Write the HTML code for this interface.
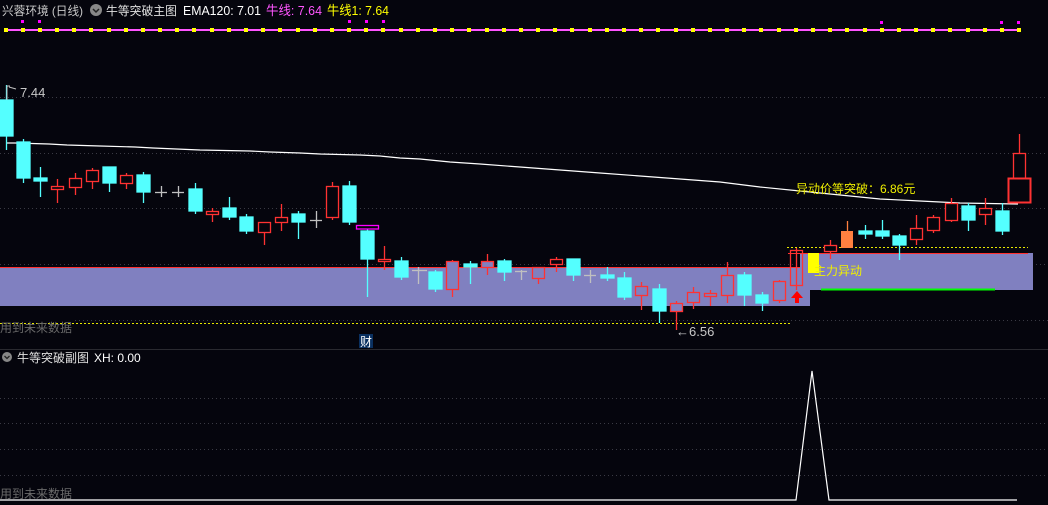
<!DOCTYPE html>
<html><head><meta charset="utf-8"><style>
html,body{margin:0;padding:0;background:#05050d;width:1048px;height:505px;overflow:hidden}
svg{display:block}
text{font-family:"Liberation Sans","Noto Sans CJK SC",sans-serif}
</style></head><body>
<svg width="1048" height="505" viewBox="0 0 1048 505" xmlns="http://www.w3.org/2000/svg">
<rect width="1048" height="505" fill="#05050d"/>
<!-- header -->
<text x="2" y="15" font-size="12" fill="#c8c8c8" textLength="81" lengthAdjust="spacingAndGlyphs">兴蓉环境 (日线)</text>
<circle cx="96" cy="10" r="6" fill="#888"/><path d="M93 9 l3 3 l3 -3" stroke="#222" stroke-width="1.5" fill="none"/>
<text x="106" y="15" font-size="12" fill="#e0e0e0" textLength="71" lengthAdjust="spacingAndGlyphs">牛等突破主图</text>
<text x="183" y="15" font-size="13" fill="#ffffff" textLength="78" lengthAdjust="spacingAndGlyphs">EMA120: 7.01</text>
<text x="266" y="15" font-size="13" fill="#ff55ff" textLength="56" lengthAdjust="spacingAndGlyphs">牛线: 7.64</text>
<text x="327" y="15" font-size="13" fill="#ffff00" textLength="62" lengthAdjust="spacingAndGlyphs">牛线1: 7.64</text>
<!-- magenta line with yellow dots -->
<line x1="4" y1="30" x2="1021" y2="30" stroke="#ff55ff" stroke-width="2"/>
<g fill="#ffff00">
<rect x="4" y="28" width="4" height="4"/><rect x="21" y="28" width="4" height="4"/><rect x="38" y="28" width="4" height="4"/><rect x="55" y="28" width="4" height="4"/><rect x="72" y="28" width="4" height="4"/><rect x="89" y="28" width="4" height="4"/><rect x="107" y="28" width="4" height="4"/><rect x="124" y="28" width="4" height="4"/><rect x="141" y="28" width="4" height="4"/><rect x="158" y="28" width="4" height="4"/><rect x="175" y="28" width="4" height="4"/><rect x="192" y="28" width="4" height="4"/><rect x="210" y="28" width="4" height="4"/><rect x="227" y="28" width="4" height="4"/><rect x="244" y="28" width="4" height="4"/><rect x="261" y="28" width="4" height="4"/><rect x="278" y="28" width="4" height="4"/><rect x="296" y="28" width="4" height="4"/><rect x="313" y="28" width="4" height="4"/><rect x="330" y="28" width="4" height="4"/><rect x="347" y="28" width="4" height="4"/><rect x="364" y="28" width="4" height="4"/><rect x="381" y="28" width="4" height="4"/><rect x="399" y="28" width="4" height="4"/><rect x="416" y="28" width="4" height="4"/><rect x="433" y="28" width="4" height="4"/><rect x="450" y="28" width="4" height="4"/><rect x="467" y="28" width="4" height="4"/><rect x="485" y="28" width="4" height="4"/><rect x="502" y="28" width="4" height="4"/><rect x="519" y="28" width="4" height="4"/><rect x="536" y="28" width="4" height="4"/><rect x="553" y="28" width="4" height="4"/><rect x="570" y="28" width="4" height="4"/><rect x="588" y="28" width="4" height="4"/><rect x="605" y="28" width="4" height="4"/><rect x="622" y="28" width="4" height="4"/><rect x="639" y="28" width="4" height="4"/><rect x="656" y="28" width="4" height="4"/><rect x="674" y="28" width="4" height="4"/><rect x="691" y="28" width="4" height="4"/><rect x="708" y="28" width="4" height="4"/><rect x="725" y="28" width="4" height="4"/><rect x="742" y="28" width="4" height="4"/><rect x="759" y="28" width="4" height="4"/><rect x="777" y="28" width="4" height="4"/><rect x="794" y="28" width="4" height="4"/><rect x="811" y="28" width="4" height="4"/><rect x="828" y="28" width="4" height="4"/><rect x="845" y="28" width="4" height="4"/><rect x="863" y="28" width="4" height="4"/><rect x="880" y="28" width="4" height="4"/><rect x="897" y="28" width="4" height="4"/><rect x="914" y="28" width="4" height="4"/><rect x="931" y="28" width="4" height="4"/><rect x="948" y="28" width="4" height="4"/><rect x="966" y="28" width="4" height="4"/><rect x="983" y="28" width="4" height="4"/><rect x="1000" y="28" width="4" height="4"/><rect x="1017" y="28" width="4" height="4"/>
</g>
<g fill="#ff00ff">
<rect x="21" y="20" width="3" height="3"/><rect x="38" y="20" width="3" height="3"/><rect x="348" y="20" width="3" height="3"/><rect x="365" y="20" width="3" height="3"/><rect x="382" y="20" width="3" height="3"/><rect x="880" y="21" width="3" height="3"/><rect x="1000" y="21" width="3" height="3"/><rect x="1017" y="21" width="3" height="3"/>
</g>
<!-- grid -->
<g stroke="#3a3a44" stroke-width="1" stroke-dasharray="1 3">
<line x1="0" y1="97.5" x2="1048" y2="97.5"/><line x1="0" y1="153.5" x2="1048" y2="153.5"/><line x1="0" y1="208.5" x2="1048" y2="208.5"/><line x1="0" y1="264.5" x2="1048" y2="264.5"/><line x1="75" y1="320.5" x2="1048" y2="320.5"/>
<line x1="0" y1="398.5" x2="1048" y2="398.5"/><line x1="0" y1="423.5" x2="1048" y2="423.5"/><line x1="0" y1="449.5" x2="1048" y2="449.5"/><line x1="0" y1="475.5" x2="1048" y2="475.5"/>
</g>
<!-- purple zones -->
<rect x="0" y="267" width="810" height="39" fill="#8080c0"/>
<line x1="0" y1="267.5" x2="810" y2="267.5" stroke="#ff3030"/>
<rect x="800" y="253" width="233" height="37" fill="#8080c0"/>
<line x1="788" y1="253.5" x2="1028" y2="253.5" stroke="#ff3030"/>
<line x1="821" y1="289.5" x2="995" y2="289.5" stroke="#00ff00" stroke-width="2"/>
<!-- dotted yellow -->
<line x1="0" y1="323.5" x2="790" y2="323.5" stroke="#e8e800" stroke-dasharray="2 2"/>
<line x1="787" y1="247.5" x2="1028" y2="247.5" stroke="#e8e800" stroke-dasharray="2 2"/>
<!-- EMA -->
<polyline fill="none" stroke="#ffffff" stroke-width="1.2" points="7,143 15,143 49,144 67,145 100,146 135,147 153,148 200,150 250,151 270,152 300,153 320,154 360,155 380,156 400,158 420,159 450,162 480,164 520,167 560,170 600,173 640,176 680,179 720,182 760,187 800,191 840,195 880,199 920,201 960,203 1018,204"/>
<!-- candles -->
<g stroke-width="1.3">
<g stroke="#54ffff" fill="#54ffff">
<line x1="6.5" y1="85" x2="6.5" y2="150"/><rect x="0" y="100" width="13" height="36"/>
<line x1="23.5" y1="139" x2="23.5" y2="183"/><rect x="17" y="142" width="13" height="36"/>
<line x1="40.5" y1="167" x2="40.5" y2="197"/><rect x="34" y="178" width="13" height="3"/>
<line x1="109.5" y1="167" x2="109.5" y2="192"/><rect x="103" y="167" width="13" height="16"/>
<line x1="143.5" y1="172" x2="143.5" y2="203"/><rect x="137" y="175" width="13" height="17"/>
<line x1="195.5" y1="183" x2="195.5" y2="214"/><rect x="189" y="189" width="13" height="22"/>
<line x1="229.5" y1="197" x2="229.5" y2="220"/><rect x="223" y="208" width="13" height="9"/>
<line x1="246.5" y1="214" x2="246.5" y2="234"/><rect x="240" y="217" width="13" height="14"/>
<line x1="298.5" y1="211" x2="298.5" y2="239"/><rect x="292" y="214" width="13" height="8"/>
<line x1="349.5" y1="181" x2="349.5" y2="225"/><rect x="343" y="186" width="13" height="36"/>
<line x1="367.5" y1="229" x2="367.5" y2="297"/><rect x="361" y="231" width="13" height="28"/>
<line x1="401.5" y1="257" x2="401.5" y2="280"/><rect x="395" y="261" width="13" height="16"/>
<line x1="435.5" y1="270" x2="435.5" y2="292"/><rect x="429" y="272" width="13" height="17"/>
<line x1="470.5" y1="261" x2="470.5" y2="284"/><rect x="464" y="264" width="13" height="3"/>
<line x1="504.5" y1="259" x2="504.5" y2="281"/><rect x="498" y="261" width="13" height="11"/>
<line x1="573.5" y1="259" x2="573.5" y2="281"/><rect x="567" y="259" width="13" height="16"/>
<line x1="607.5" y1="267" x2="607.5" y2="281"/><rect x="601" y="275" width="13" height="3"/>
<line x1="624.5" y1="272" x2="624.5" y2="300"/><rect x="618" y="278" width="13" height="19"/>
<line x1="659.5" y1="284" x2="659.5" y2="323"/><rect x="653" y="289" width="13" height="22"/>
<line x1="744.5" y1="272" x2="744.5" y2="306"/><rect x="738" y="275" width="13" height="20"/>
<line x1="762.5" y1="292" x2="762.5" y2="311"/><rect x="756" y="295" width="12" height="8"/>
<line x1="865.5" y1="225" x2="865.5" y2="239"/><rect x="859" y="231" width="13" height="3"/>
<line x1="882.5" y1="220" x2="882.5" y2="239"/><rect x="876" y="231" width="13" height="5"/>
<line x1="899.5" y1="234" x2="899.5" y2="260"/><rect x="893" y="236" width="13" height="9"/>
<line x1="968.5" y1="203" x2="968.5" y2="231"/><rect x="962" y="206" width="13" height="14"/>
<line x1="1002.5" y1="203" x2="1002.5" y2="235"/><rect x="996" y="211" width="13" height="20"/>
</g>
<g stroke="#ff3232" fill="none">
<line x1="57.5" y1="179" x2="57.5" y2="203"/><rect x="51.5" y="186.5" width="12" height="3" fill="#05050d"/>
<line x1="75.5" y1="173" x2="75.5" y2="195"/><rect x="69.5" y="178.5" width="12" height="9" fill="#05050d"/>
<line x1="92.5" y1="168" x2="92.5" y2="189"/><rect x="86.5" y="170.5" width="12" height="11" fill="#05050d"/>
<line x1="126.5" y1="173" x2="126.5" y2="189"/><rect x="120.5" y="175.5" width="12" height="8" fill="#05050d"/>
<line x1="212.5" y1="208" x2="212.5" y2="222"/><rect x="206.5" y="211.5" width="12" height="3" fill="#05050d"/>
<line x1="264.5" y1="222" x2="264.5" y2="245"/><rect x="258.5" y="222.5" width="12" height="10" fill="#05050d"/>
<line x1="281.5" y1="204" x2="281.5" y2="231"/><rect x="275.5" y="217.5" width="12" height="5" fill="#05050d"/>
<line x1="332.5" y1="182" x2="332.5" y2="220"/><rect x="326.5" y="186.5" width="12" height="31" fill="#05050d"/>
<line x1="384.5" y1="246" x2="384.5" y2="270"/><rect x="378.5" y="259.5" width="12" height="2" fill="#05050d"/>
<line x1="452.5" y1="260" x2="452.5" y2="297"/><rect x="446.5" y="261.5" width="12" height="28" fill="#8080c0"/>
<line x1="487.5" y1="254" x2="487.5" y2="275"/><rect x="481.5" y="261.5" width="12" height="6" fill="#8080c0"/>
<line x1="538.5" y1="267" x2="538.5" y2="284"/><rect x="532.5" y="267.5" width="12" height="11" fill="#8080c0"/>
<line x1="556.5" y1="257" x2="556.5" y2="272"/><rect x="550.5" y="259.5" width="12" height="5" fill="#05050d"/>
<line x1="641.5" y1="282" x2="641.5" y2="310"/><rect x="635.5" y="286.5" width="12" height="9" fill="#8080c0"/>
<line x1="676.5" y1="301" x2="676.5" y2="330"/><rect x="670.5" y="303.5" width="12" height="8" fill="#8080c0"/>
<line x1="693.5" y1="287" x2="693.5" y2="309"/><rect x="687.5" y="292.5" width="12" height="10" fill="#8080c0"/>
<line x1="710.5" y1="290" x2="710.5" y2="306"/><rect x="704.5" y="293.5" width="12" height="3" fill="#8080c0"/>
<line x1="727.5" y1="262" x2="727.5" y2="303"/><rect x="721.5" y="275.5" width="12" height="20" fill="#8080c0"/>
<line x1="779.5" y1="280" x2="779.5" y2="303"/><rect x="773.5" y="281.5" width="12" height="19" fill="#8080c0"/>
<line x1="796.5" y1="248" x2="796.5" y2="290"/><rect x="790.5" y="250.5" width="12" height="35"/>
<line x1="830.5" y1="240" x2="830.5" y2="259"/><rect x="824.5" y="245.5" width="12" height="6" fill="#05050d"/>
<line x1="916.5" y1="215" x2="916.5" y2="245"/><rect x="910.5" y="228.5" width="12" height="11" fill="#05050d"/>
<line x1="933.5" y1="215" x2="933.5" y2="233"/><rect x="927.5" y="217.5" width="12" height="13" fill="#05050d"/>
<line x1="951.5" y1="198" x2="951.5" y2="222"/><rect x="945.5" y="203.5" width="12" height="17" fill="#05050d"/>
<line x1="985.5" y1="198" x2="985.5" y2="225"/><rect x="979.5" y="208.5" width="12" height="6" fill="#05050d"/>
<line x1="1019.5" y1="134" x2="1019.5" y2="153"/><rect x="1013.5" y="153.5" width="12" height="25"/>
<rect x="1008.5" y="178.5" width="22" height="24" stroke-width="2"/>
</g>
<g stroke="#c0c0c0">
<line x1="155" y1="192.5" x2="167" y2="192.5"/><line x1="161.5" y1="186" x2="161.5" y2="197"/>
<line x1="172" y1="192.5" x2="184" y2="192.5"/><line x1="178.5" y1="186" x2="178.5" y2="197"/>
<line x1="310" y1="220.5" x2="322" y2="220.5"/><line x1="316.5" y1="211" x2="316.5" y2="228"/>
<line x1="412" y1="270.5" x2="427" y2="270.5"/><line x1="418.5" y1="267" x2="418.5" y2="284"/>
<line x1="515" y1="271.5" x2="527" y2="271.5"/><line x1="521.5" y1="270" x2="521.5" y2="280"/>
<line x1="584" y1="275.5" x2="596" y2="275.5"/><line x1="590.5" y1="270" x2="590.5" y2="283"/>
</g>
<rect x="356.5" y="225.5" width="22" height="3.5" fill="none" stroke="#ff00ff" stroke-width="1.3"/>
<rect x="808" y="253" width="11" height="20" fill="#ffff00"/>
<rect x="841" y="231" width="12" height="17" fill="#ff8040"/><line x1="847.5" y1="221" x2="847.5" y2="231" stroke="#ff8040"/>
</g>
<!-- arrow -->
<path d="M797 291 L791 298 L795 298 L795 303 L799 303 L799 298 L803 298 Z" fill="#ff0000"/>
<!-- labels -->
<path d="M7 100 V86 H10 M9 87 L16 89" stroke="#c0c0c0" fill="none"/>
<text x="20" y="97" font-size="13" fill="#c8c8c8">7.44</text>
<text x="676" y="336" font-size="13" fill="#c8c8c8">←6.56</text>
<text x="796" y="193" font-size="12" fill="#f0f000">异动价等突破：6.86元</text>
<text x="814" y="275" font-size="12" fill="#f0f000">主力异动</text>
<text x="0" y="332" font-size="12" fill="#6a6a6a">用到未来数据</text>
<rect x="359" y="334" width="14" height="14" fill="#0a3060"/>
<text x="360" y="346" font-size="12" fill="#ffffff">财</text>
<line x1="0" y1="349.5" x2="1048" y2="349.5" stroke="#2a2a30"/>
<!-- sub chart -->
<circle cx="7" cy="357" r="5" fill="#888"/><path d="M4.5 356 l2.5 2.5 l2.5 -2.5" stroke="#222" stroke-width="1.3" fill="none"/>
<text x="17" y="362" font-size="12" fill="#e0e0e0">牛等突破副图</text>
<text x="94" y="362" font-size="12" fill="#ffffff">XH: 0.00</text>
<polyline fill="none" stroke="#ffffff" stroke-width="1.2" points="0,500 796,500 812,371 829,500 1017,500"/>
<text x="0" y="498" font-size="12" fill="#6a6a6a">用到未来数据</text>
</svg>
</body></html>
